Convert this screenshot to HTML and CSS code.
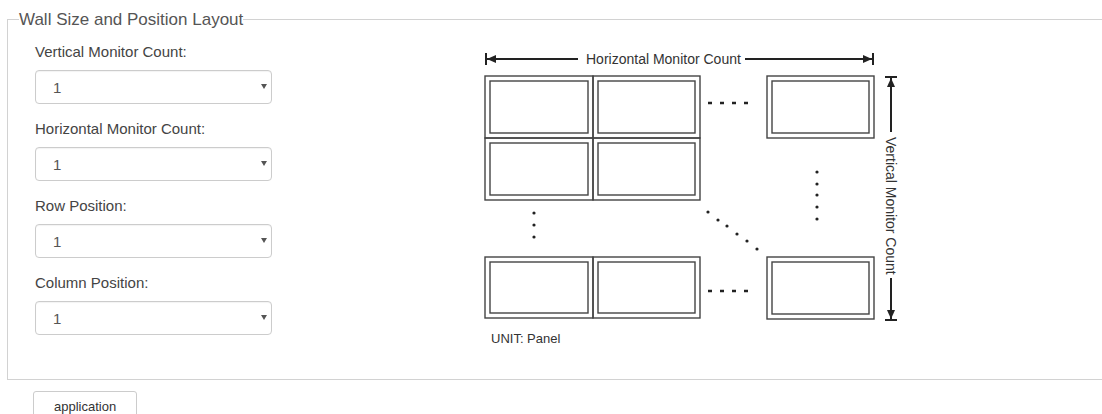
FILE: index.html
```html
<!DOCTYPE html>
<html lang="en">
<head>
<meta charset="UTF-8">
<meta name="viewport" content="width=device-width, initial-scale=1.0">
<title>Wall Size and Position Layout</title>
<link rel="stylesheet" href="styles.css">
</head>
<body>

<form id="wall-form">
  <fieldset class="wall-box">
    <legend>Wall Size and Position Layout</legend>

    <div class="wall-content">
      <!-- selects -->
      <div class="wall-fields">
        <div class="field">
          <label for="vertical-count">Vertical Monitor Count:</label>
          <div class="select-wrap">
            <select id="vertical-count"><option>1</option><option>2</option><option>3</option><option>4</option></select>
          </div>
        </div>
        <div class="field">
          <label for="horizontal-count">Horizontal Monitor Count:</label>
          <div class="select-wrap">
            <select id="horizontal-count"><option>1</option><option>2</option><option>3</option><option>4</option></select>
          </div>
        </div>
        <div class="field">
          <label for="row-position">Row Position:</label>
          <div class="select-wrap">
            <select id="row-position"><option>1</option></select>
          </div>
        </div>
        <div class="field">
          <label for="column-position">Column Position:</label>
          <div class="select-wrap">
            <select id="column-position"><option>1</option></select>
          </div>
        </div>
      </div>

      <!-- diagram -->
      <svg class="wall-diagram" width="440" height="318" viewBox="0 0 440 318">
        <g class="arrow">
          <line x1="16" y1="17" x2="108" y2="17"/>
          <line x1="16" y1="11" x2="16" y2="23"/>
          <polygon points="17,17 26,13 26,21"/>
          <line x1="275" y1="17" x2="403" y2="17"/>
          <line x1="403" y1="11" x2="403" y2="23"/>
          <polygon points="402,17 393,13 393,21"/>

          <line x1="421" y1="35" x2="421" y2="90"/>
          <line x1="415" y1="35" x2="427" y2="35"/>
          <polygon points="421,36 417,45 425,45"/>
          <line x1="421" y1="236" x2="421" y2="278"/>
          <line x1="415" y1="278" x2="427" y2="278"/>
          <polygon points="421,277 417,268 425,268"/>
        </g>
        <text class="diagram-text" x="116" y="22">Horizontal Monitor Count</text>
        <text class="diagram-text" transform="translate(416,95) rotate(90)">Vertical Monitor Count</text>

        <g class="panel">
          <rect x="15" y="34" width="108" height="62"/><rect x="20" y="39" width="98" height="52"/>
          <rect x="123" y="34" width="107" height="62"/><rect x="128" y="39" width="97" height="52"/>
          <rect x="15" y="96" width="108" height="62"/><rect x="20" y="101" width="98" height="52"/>
          <rect x="123" y="96" width="107" height="62"/><rect x="128" y="101" width="97" height="52"/>
          <rect x="15" y="215" width="108" height="61"/><rect x="20" y="220" width="98" height="51"/>
          <rect x="123" y="215" width="107" height="61"/><rect x="128" y="220" width="97" height="51"/>
          <rect x="297" y="34" width="107" height="62"/><rect x="302" y="39" width="97" height="52"/>
          <rect x="297" y="215" width="107" height="62"/><rect x="302" y="220" width="97" height="52"/>
        </g>

        <g class="dots">
          <line x1="238" y1="61" x2="280" y2="61"/>
          <line x1="238" y1="249" x2="280" y2="249"/>
        </g>
        <g class="dot">
          <circle cx="347" cy="130" r="1.6"/><circle cx="347" cy="142" r="1.6"/><circle cx="347" cy="153" r="1.6"/><circle cx="347" cy="165" r="1.6"/><circle cx="347" cy="177" r="1.6"/>
          <circle cx="64" cy="171" r="1.6"/><circle cx="64" cy="183" r="1.6"/><circle cx="64" cy="195" r="1.6"/>
          <circle cx="238" cy="170" r="1.6"/><circle cx="248" cy="178" r="1.6"/><circle cx="257" cy="184" r="1.6"/><circle cx="267" cy="192" r="1.6"/><circle cx="277" cy="199" r="1.6"/><circle cx="287" cy="207" r="1.6"/>
        </g>

        <text class="unit-text" x="21" y="301">UNIT: Panel</text>
      </svg>
    </div>
  </fieldset>

  <button type="submit" class="apply-btn">application</button>
</form>

</body>
</html>
```

FILE: styles.css
```css
body {
  font-family: "Liberation Sans", Arial, sans-serif;
  margin: 0;
  padding: 0;
  background-color: #fff;
  color: #333;
  overflow: hidden;
}

.wall-box {
  margin: 10px 0 0 7px;
  padding: 13px 0 19px 0;
  border: 1px solid #d2d2d2;
  border-right: none;
}

.wall-box legend {
  margin-left: 11px;
  padding: 0;
  font-size: 17px;
  line-height: 19px;
  color: #555;
}

.wall-content {
  display: flex;
  align-items: flex-start;
  padding-left: 27px;
}

.wall-fields {
  width: 237px;
}

.field {
  margin-bottom: 15px;
}

.field label {
  display: block;
  font-size: 15px;
  line-height: 20px;
  color: #444;
  margin-bottom: 8px;
}

.select-wrap {
  position: relative;
}

.select-wrap::after {
  content: "";
  position: absolute;
  right: 5px;
  top: 14px;
  border-left: 3.5px solid transparent;
  border-right: 3.5px solid transparent;
  border-top: 5px solid #555;
  pointer-events: none;
}

.select-wrap select {
  appearance: none;
  -webkit-appearance: none;
  width: 100%;
  height: 34px;
  padding: 0 0 0 17px;
  font-family: inherit;
  font-size: 15px;
  color: #555;
  background-color: #fff;
  border: 1px solid #ccc;
  border-radius: 4px;
  box-shadow: inset 0 1px 1px rgba(0, 0, 0, 0.05);
}

.wall-diagram {
  margin-left: 198px;
  flex-shrink: 0;
}

.arrow line {
  stroke: #222;
  stroke-width: 2;
}

.arrow polygon {
  fill: #222;
}

.diagram-text {
  font-size: 14px;
  fill: #333;
}

.unit-text {
  font-size: 13px;
  fill: #333;
}

.panel rect {
  fill: none;
  stroke: #444;
  stroke-width: 1.4;
}

.dots line {
  stroke: #222;
  stroke-width: 2.5;
  stroke-dasharray: 4 8;
}

.dot circle {
  fill: #222;
}

.apply-btn {
  margin: 11px 0 0 33px;
  padding: 6px 20px;
  font-family: inherit;
  font-size: 13px;
  line-height: 1.42857;
  color: #333;
  background-color: #fff;
  border: 1px solid #ccc;
  border-radius: 3px;
  cursor: pointer;
}

.apply-btn:hover {
  background-color: #e6e6e6;
}
```
